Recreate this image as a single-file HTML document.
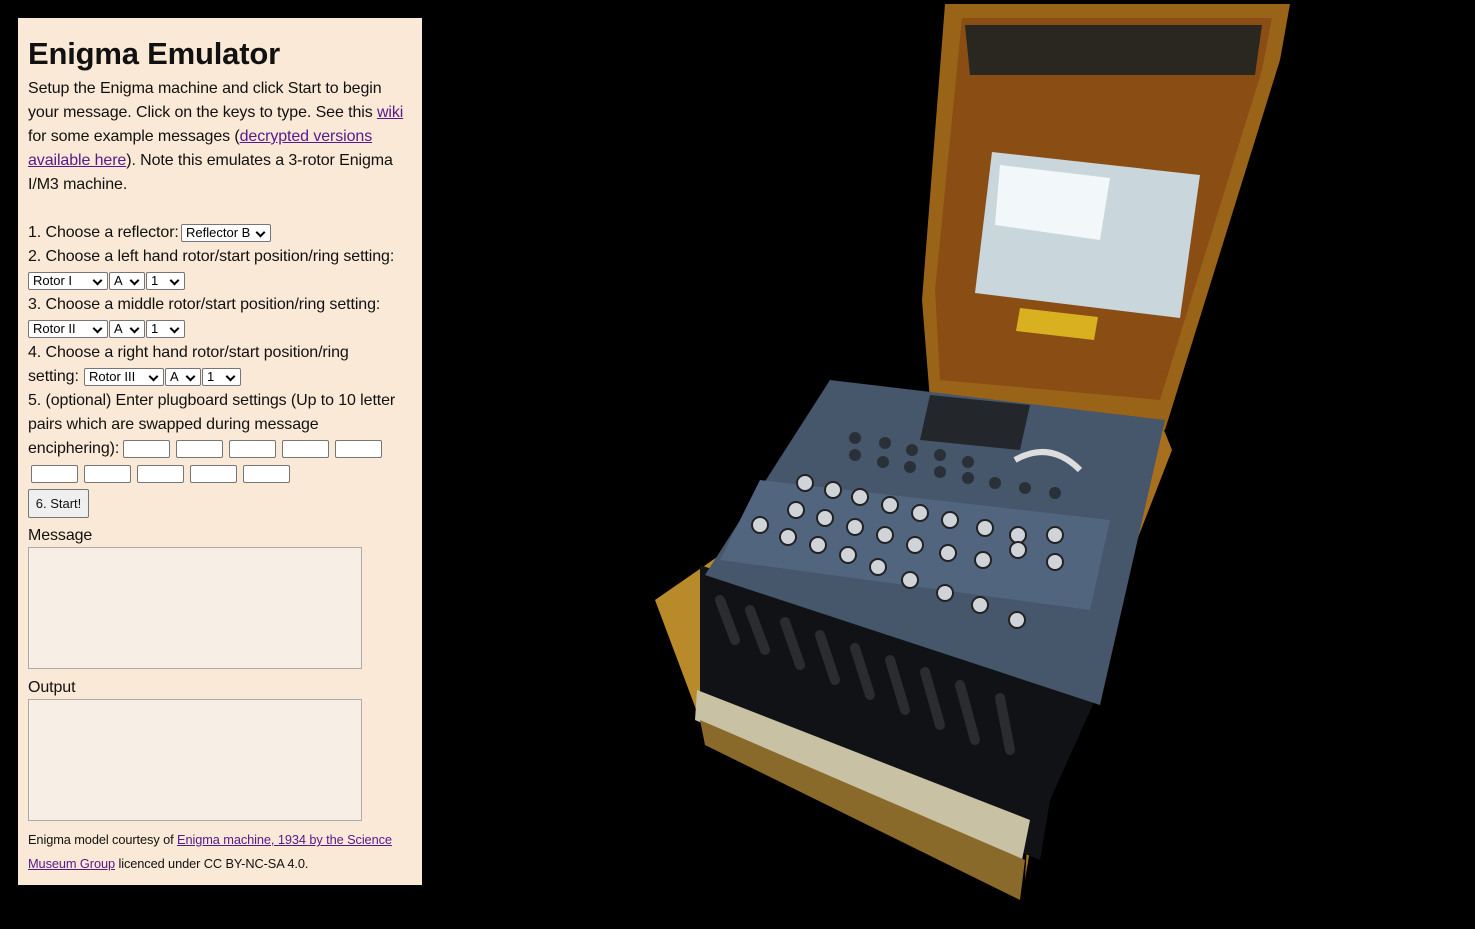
<!DOCTYPE html>
<html><head><meta charset="utf-8"><style>
html,body{margin:0;padding:0;background:#000;width:1475px;height:929px;overflow:hidden}
#p{position:absolute;left:18px;top:18px;width:404px;height:867px;background:#fae9d6;font-family:"Liberation Sans",sans-serif;color:#111}
.l{position:absolute;left:10px;white-space:nowrap;font-size:16px;line-height:24px;letter-spacing:-0.1px}
h1{position:absolute;left:10px;top:16px;margin:0;font-size:31px;font-weight:bold;line-height:40px;letter-spacing:-0.2px}
a{color:#551a8b;text-decoration:underline}
.s{position:absolute;height:18px;border:1px solid #767676;border-radius:2px;background:#fff;font-size:13px;line-height:16px;padding-left:4px;box-sizing:border-box;color:#000}
.s:after{content:"";position:absolute;right:6px;top:4px;width:5px;height:5px;border-right:2px solid #000;border-bottom:2px solid #000;transform:rotate(45deg)}
.i{position:absolute;width:47px;height:18px;border:1px solid #767676;border-radius:2px;background:#fff;box-sizing:border-box}
.ta{position:absolute;left:10px;width:334px;height:122px;border:1px solid #aaa;background:#f7efe6;box-sizing:border-box}
.sm{font-size:12.8px}
</style></head><body>
<div id="p">
<h1>Enigma Emulator</h1>
<div class="l" style="top:59px">Setup the Enigma machine and click Start to begin</div>
<div class="l" style="top:83px">your message. Click on the keys to type. See this <a>wiki</a></div>
<div class="l" style="top:107px">for some example messages (<a>decrypted versions</a></div>
<div class="l" style="top:131px"><a>available here</a>). Note this emulates a 3-rotor Enigma</div>
<div class="l" style="top:155px">I/M3 machine.</div>
<div class="l" style="top:203px">1. Choose a reflector:</div>
<div class="s" style="left:163px;top:206px;width:90px">Reflector B</div>
<div class="l" style="top:227px">2. Choose a left hand rotor/start position/ring setting:</div>
<div class="s" style="left:10px;top:254px;width:80px">Rotor I</div><div class="s" style="left:91px;top:254px;width:36px">A</div><div class="s" style="left:128px;top:254px;width:39px">1</div>
<div class="l" style="top:275px">3. Choose a middle rotor/start position/ring setting:</div>
<div class="s" style="left:10px;top:302px;width:80px">Rotor II</div><div class="s" style="left:91px;top:302px;width:36px">A</div><div class="s" style="left:128px;top:302px;width:39px">1</div>
<div class="l" style="top:323px">4. Choose a right hand rotor/start position/ring</div>
<div class="l" style="top:347px">setting:</div>
<div class="s" style="left:66px;top:350px;width:80px">Rotor III</div><div class="s" style="left:147px;top:350px;width:36px">A</div><div class="s" style="left:184px;top:350px;width:39px">1</div>
<div class="l" style="top:371px">5. (optional) Enter plugboard settings (Up to 10 letter</div>
<div class="l" style="top:395px">pairs which are swapped during message</div>
<div class="l" style="top:419px">enciphering):</div>
<div class="i" style="left:105px;top:422px"></div><div class="i" style="left:158px;top:422px"></div><div class="i" style="left:211px;top:422px"></div><div class="i" style="left:264px;top:422px"></div><div class="i" style="left:317px;top:422px"></div>
<div class="i" style="left:13px;top:447px"></div><div class="i" style="left:66px;top:447px"></div><div class="i" style="left:119px;top:447px"></div><div class="i" style="left:172px;top:447px"></div><div class="i" style="left:225px;top:447px"></div>
<div style="position:absolute;left:10px;top:471px;width:61px;height:29px;border:1px solid #767676;border-radius:2px;background:#efefef;box-sizing:border-box;font-size:13px;line-height:27px;text-align:center">6. Start!</div>
<div class="l" style="top:506px">Message</div>
<div class="ta" style="top:529px"></div>
<div class="l" style="top:658px">Output</div>
<div class="ta" style="top:681px"></div>
<div class="l sm" style="top:810px">Enigma model courtesy of <a>Enigma machine, 1934 by the Science</a></div>
<div class="l sm" style="top:834px"><a>Museum Group</a> licenced under CC BY-NC-SA 4.0.</div>
</div>
<svg style="position:absolute;left:0;top:0" width="1475" height="929">
<!-- lid -->
<polygon points="945,4 1290,4 1280,60 1165,430 930,400 922,300" fill="#9a6418"/>
<polygon points="962,18 1272,18 1262,70 1160,400 940,380 935,290" fill="#8a4e14"/>
<polygon points="965,25 1262,25 1255,75 970,75" fill="#2a2620"/>
<polygon points="992,152 1200,175 1180,318 975,293" fill="#c9d6dc"/>
<polygon points="1000,165 1110,178 1100,240 995,225" fill="#f2f8fa"/>
<polygon points="1020,308 1098,317 1094,340 1016,331" fill="#d8b020"/>
<!-- base sides -->
<polygon points="655,600 720,555 730,700 700,720" fill="#b88a2a"/>
<polygon points="1160,420 1172,450 1040,790 1025,880 1035,700" fill="#a8701e"/>
<!-- cables -->
<polygon points="700,565 1095,700 1050,800 1040,860 700,720" fill="#101216"/>
<g stroke="#2a2c30" stroke-width="10" stroke-linecap="round">
<line x1="720" y1="600" x2="735" y2="640"/><line x1="750" y1="610" x2="765" y2="650"/><line x1="785" y1="622" x2="800" y2="665"/><line x1="820" y1="635" x2="835" y2="680"/><line x1="855" y1="648" x2="870" y2="695"/><line x1="890" y1="660" x2="905" y2="710"/><line x1="925" y1="672" x2="940" y2="725"/><line x1="960" y1="685" x2="975" y2="740"/><line x1="1000" y1="698" x2="1010" y2="750"/>
</g>
<!-- keyboard -->
<polygon points="830,380 1165,420 1100,705 705,575" fill="#46566b"/>
<polygon points="760,480 1110,520 1090,610 720,560" fill="#51657e"/>
<polygon points="930,395 1030,405 1020,450 920,440" fill="#23272c"/>
<polygon points="697,690 1030,820 1022,860 695,720" fill="#c9c1a4"/>
<polygon points="700,720 1025,860 1020,900 705,745" fill="#8a6a2a"/>
<path d="M1015,460 Q1050,440 1080,470" stroke="#ddd" stroke-width="6" fill="none"/>
<g fill="#d0d4d8" stroke="#222" stroke-width="2">
<circle cx="805" cy="483" r="8"/><circle cx="833" cy="490" r="8"/><circle cx="860" cy="497" r="8"/><circle cx="890" cy="505" r="8"/><circle cx="920" cy="513" r="8"/><circle cx="950" cy="520" r="8"/><circle cx="985" cy="528" r="8"/><circle cx="1018" cy="535" r="8"/><circle cx="1055" cy="535" r="8"/>
<circle cx="796" cy="510" r="8"/><circle cx="825" cy="518" r="8"/><circle cx="855" cy="527" r="8"/><circle cx="885" cy="535" r="8"/><circle cx="915" cy="545" r="8"/><circle cx="948" cy="553" r="8"/><circle cx="983" cy="560" r="8"/><circle cx="1018" cy="550" r="8"/>
<circle cx="760" cy="525" r="8"/><circle cx="788" cy="537" r="8"/><circle cx="818" cy="545" r="8"/><circle cx="848" cy="555" r="8"/><circle cx="878" cy="567" r="8"/><circle cx="910" cy="580" r="8"/><circle cx="945" cy="593" r="8"/><circle cx="980" cy="605" r="8"/><circle cx="1017" cy="620" r="8"/><circle cx="1055" cy="562" r="8"/>
</g>
<g fill="#2a3038">
<circle cx="855" cy="455" r="6"/><circle cx="883" cy="462" r="6"/><circle cx="910" cy="467" r="6"/><circle cx="940" cy="472" r="6"/><circle cx="968" cy="478" r="6"/><circle cx="995" cy="483" r="6"/><circle cx="1025" cy="488" r="6"/><circle cx="1055" cy="493" r="6"/>
<circle cx="855" cy="438" r="6"/><circle cx="885" cy="443" r="6"/><circle cx="912" cy="450" r="6"/><circle cx="940" cy="455" r="6"/><circle cx="968" cy="462" r="6"/>
</g>
</svg>
</body></html>
